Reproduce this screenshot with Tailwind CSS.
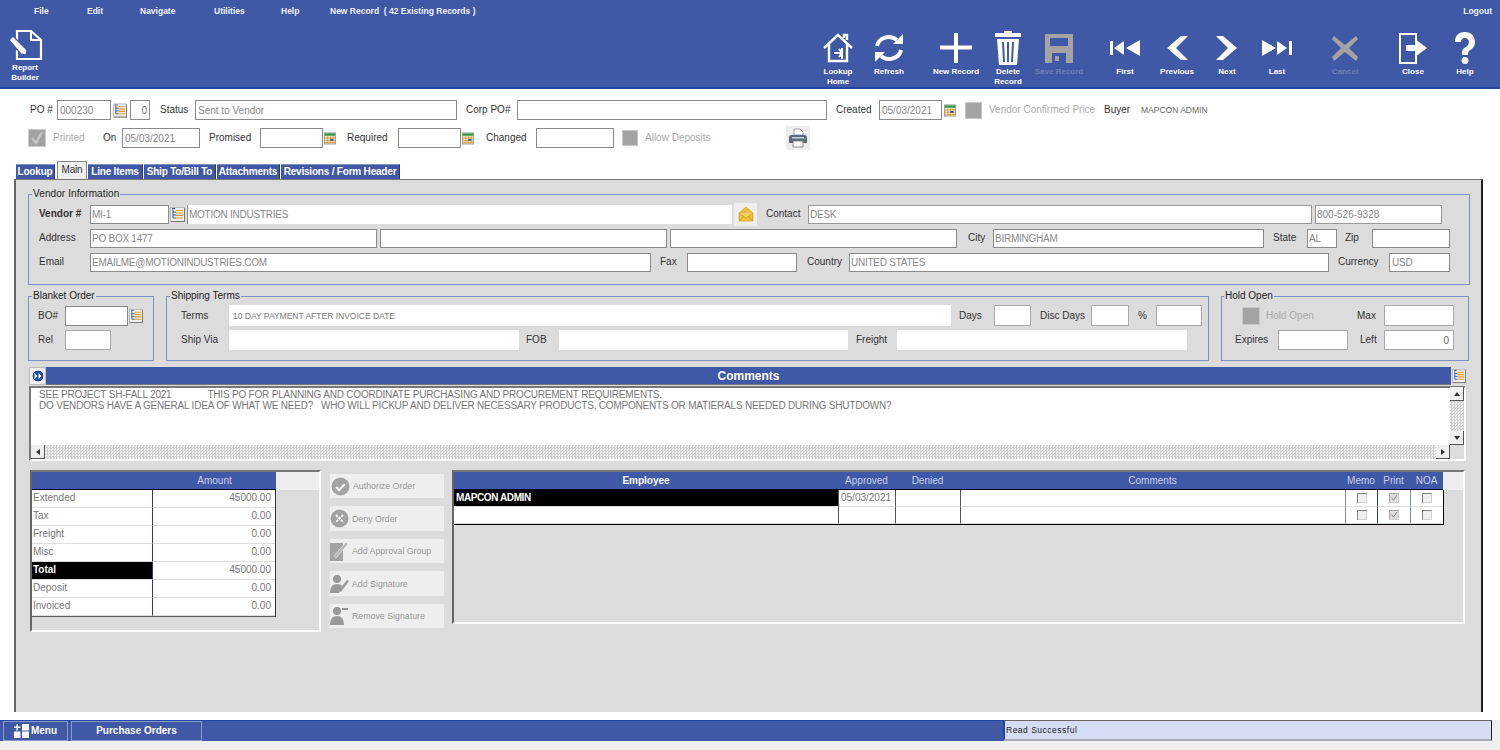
<!DOCTYPE html>
<html lang="en">
<head>
  <meta charset="UTF-8">
  <title>Purchase Orders</title>
  <script src="https://cdn.jsdelivr.net/npm/@tailwindcss/browser@4"></script>
</head>
<body class="w-[1500px] h-[750px] overflow-hidden bg-white flex flex-col font-['Liberation_Sans',Arial,sans-serif] text-[10px] leading-[12px] text-[#333]">
  <svg class="hidden">
    <symbol id="tree" viewBox="0 0 15 15">
      <rect x="0.5" y="0.5" width="14" height="14" fill="#efefef" stroke="#bbb"/>
      <path d="M2 1.5h3M3 2v9h3M3 5h3M3 8h3" stroke="#3a5bb0" fill="none"/>
      <path d="M6 3.5h7M6 6h7M6 8.5h7M6 11h7" stroke="#e0a020" stroke-width="1.2"/>
      <path d="M1 14.5h14M14.5 1v14" stroke="#777"/>
    </symbol>
    <symbol id="cal" viewBox="0 0 13 13">
      <rect x="0.5" y="0.5" width="12" height="12" fill="#eee8c8" stroke="#999"/>
      <rect x="1" y="1" width="11" height="2.5" fill="#2e9a48"/>
      <path d="M1 6h11M1 8.500h11M1 11h11M4 4v8M7 4v8M10 4v8" stroke="#d6902a" stroke-width="0.8"/>
      <rect x="7" y="7" width="3" height="2" fill="#2b50c8"/>
    </symbol>
    <symbol id="check" viewBox="0 0 12 12">
      <rect x="0.500" y="0.500" width="11" height="11" fill="#eee" stroke="#ccc"/>
      <path d="M0.500 11.500v-11h11" fill="none" stroke="#666"/>
    </symbol>
    <symbol id="checked" viewBox="0 0 12 12">
      <rect x="0.500" y="0.500" width="11" height="11" fill="#ddd" stroke="#ccc"/>
      <path d="M0.500 11.500v-11h11" fill="none" stroke="#999"/>
      <path d="M3 5.500l2.500 3 4-6" fill="none" stroke="#888" stroke-width="1.200"/>
    </symbol>
  </svg>

  <header class="h-[89px] shrink-0 bg-[#4059a6] border-b-2 border-[#2347a0] text-white flex flex-col">
    <nav class="flex h-[21px] items-center text-[8.500px] font-bold text-[#eef1fa]">
      <a class="ml-[34px] w-[53px]">File</a>
      <a class="w-[53px]">Edit</a>
      <a class="w-[74px]">Navigate</a>
      <a class="w-[67px]">Utilities</a>
      <a class="w-[49px]">Help</a>
      <a>New Record &nbsp;( 42 Existing Records )</a>
      <a class="ml-auto mr-[8px]">Logout</a>
    </nav>
    <div class="flex pt-[10px] text-[8px] leading-[10px] font-bold text-center">
      <div class="ml-[8px] w-[32px] -mt-[2px]">
        <svg class="block w-[36px] h-[32px]" viewBox="0 0 36 32" fill="none" stroke="#fff">
          <path d="M9 14V2h14l10 9v19H9V21" stroke-width="2.200"/>
          <path d="M23 2v9h10" stroke-width="2"/>
          <path d="M5 7l14 14-1 5-5-1L1 11z" fill="#fff" stroke="#4059a6" stroke-width="1.200"/>
        </svg>
        <div class="mt-[2px] -ml-[3px] w-[40px]">Report<br>Builder</div>
      </div>
      <div class="ml-[773px] w-[50px] flex flex-col items-center">
        <svg class="w-[32px] h-[34px]" viewBox="0 0 32 32" fill="none" stroke="#fff" stroke-width="2.400">
          <path d="M2 16L16 3l14 13M7 12v17h18V12M22 6V3h3v5" />
          <path d="M12 21h8M17 17l3 4-3 4M20 16v11" stroke-width="2"/>
        </svg>
        <div class="mt-[2px]">Lookup<br>Home</div>
      </div>
      <div class="ml-[1px] w-[50px] flex flex-col items-center">
        <svg class="w-[32px] h-[34px]" viewBox="0 0 32 32" fill="none" stroke="#fff" stroke-width="4">
          <path d="M4 14A12 11 0 0 1 24 8"/><path d="M28 18A12 11 0 0 1 8 24"/>
          <path d="M20 12h10V2z" fill="#fff" stroke="none"/><path d="M12 20H2v10z" fill="#fff" stroke="none"/>
        </svg>
        <div class="mt-[2px]">Refresh</div>
      </div>
      <div class="ml-[17px] w-[50px] flex flex-col items-center">
        <svg class="w-[32px] h-[34px]" viewBox="0 0 32 32"><path d="M14 1h4v12.500h14v4H18V31h-4V17.500H0v-4h14z" fill="#fff"/></svg>
        <div class="mt-[2px]">New Record</div>
      </div>
      <div class="ml-[2px] w-[50px] flex flex-col items-center">
        <svg class="w-[28px] h-[34px]" viewBox="0 0 28 34" fill="#fff">
          <path d="M10 0h8v2h9v4H1V2h9z"/>
          <path d="M3 8h22l-2 26H5zM8 11l1 20h2l-1-20zM13 11v20h2V11zM18 11l-1 20h2l1-20z" fill-rule="evenodd"/>
        </svg>
        <div class="mt-[2px]">Delete<br>Record</div>
      </div>
      <div class="ml-[1px] w-[50px] flex flex-col items-center text-[#6d7fb8]">
        <svg class="w-[30px] h-[34px]" viewBox="0 0 30 32" fill="#a3a3a3">
          <path d="M1 2h28v29H1zM6 6v8h18V6zM8 21v10h14V21z" fill-rule="evenodd"/><rect x="11" y="24" width="4" height="5"/>
        </svg>
        <div class="mt-[2px]">Save Record</div>
      </div>
      <div class="ml-[16px] w-[50px] flex flex-col items-center">
        <svg class="w-[32px] h-[34px]" viewBox="0 0 32 32" fill="#fff"><path d="M1 9h3v14H1zM5 16l10-7v14zM17 16l14-8v16z"/></svg>
        <div class="mt-[2px]">First</div>
      </div>
      <div class="ml-[2px] w-[50px] flex flex-col items-center">
        <svg class="w-[24px] h-[34px]" viewBox="0 0 24 32" fill="#fff"><path d="M16 4h7L11 16l12 12h-7L2 16z"/></svg>
        <div class="mt-[2px]">Previous</div>
      </div>
      <div class="w-[50px] flex flex-col items-center">
        <svg class="w-[24px] h-[34px]" viewBox="0 0 24 32" fill="#fff"><path d="M8 4H1l12 12L1 28h7l14-12z"/></svg>
        <div class="mt-[2px]">Next</div>
      </div>
      <div class="w-[50px] flex flex-col items-center">
        <svg class="w-[32px] h-[34px]" viewBox="0 0 32 32" fill="#fff"><path d="M1 8l14 8-14 8zM16 9l10 7-10 7zM28 9h3v14h-3z"/></svg>
        <div class="mt-[2px]">Last</div>
      </div>
      <div class="ml-[18px] w-[50px] flex flex-col items-center text-[#6d7fb8]">
        <svg class="w-[28px] h-[34px]" viewBox="0 0 28 32"><path d="M3 4l11 9 11-9 2 3-9 9 9 9-2 4-11-9-11 9-2-4 9-9-9-9z" fill="#a3a3a3"/></svg>
        <div class="mt-[2px]">Cancel</div>
      </div>
      <div class="ml-[18px] w-[50px] flex flex-col items-center">
        <svg class="w-[30px] h-[34px]" viewBox="0 0 30 32" fill="none" stroke="#fff" stroke-width="2">
          <path d="M18 9V2H2v29h16v-7"/><path d="M8 13h9V7l12 9-12 9v-6H8z" fill="#fff" stroke="none"/>
        </svg>
        <div class="mt-[2px]">Close</div>
      </div>
      <div class="ml-[2px] w-[50px] flex flex-col items-center">
        <svg class="w-[24px] h-[34px]" viewBox="0 0 24 34" fill="#fff">
          <path d="M2 11C2 4 6 1 12 1s10 4 10 10c0 5-3 7-6 9-1 1-1 2-1 4H9c0-4 0-6 4-8 2-2 3-3 3-5 0-2-2-4-4-4-3 0-4 2-4 4z"/><circle cx="12" cy="29.500" r="3.500"/>
        </svg>
        <div class="mt-[2px]">Help</div>
      </div>
    </div>
  </header>

  <section class="h-[72px] shrink-0 pt-[11px]">
    <div class="flex items-center h-[20px]">
      <label class="ml-[30px] w-[27px]">PO #</label>
      <input value="000230" class="w-[54px] h-[20px] border border-[#8a8a8a] px-[2px] text-[10px] text-[#888]">
      <svg class="ml-[2px] w-[14px] h-[15px]"><use href="#tree"/></svg>
      <input value="0" class="ml-[3px] w-[20px] h-[20px] border border-[#8a8a8a] px-[2px] text-right text-[10px] text-[#777]">
      <label class="ml-[10px] w-[35px]">Status</label>
      <input value="Sent to Vendor" class="w-[262px] h-[20px] border border-[#8a8a8a] px-[2px] text-[10px] text-[#888]">
      <label class="ml-[9px] w-[51px]">Corp PO#</label>
      <input class="w-[310px] h-[20px] border border-[#8a8a8a]">
      <label class="ml-[9px] w-[43px]">Created</label>
      <input value="05/03/2021" class="w-[63px] h-[20px] border border-[#8a8a8a] px-[2px] text-[10px] text-[#888]">
      <svg class="ml-[2px] w-[12px] h-[13px]"><use href="#cal"/></svg>
      <div class="ml-[9px] w-[17px] h-[17px] bg-[#a3a3a3] border border-[#c8c8c8]"></div>
      <label class="ml-[7px] w-[115px] text-[#aaa]">Vendor Confirmed Price</label>
      <label class="w-[37px]">Buyer</label>
      <span class="text-[8.500px] text-[#666]">MAPCON ADMIN</span>
    </div>
    <div class="flex items-center h-[20px] mt-[8px]">
      <svg class="ml-[28px] w-[18px] h-[18px]" viewBox="0 0 18 18"><rect x="0.500" y="0.500" width="17" height="17" fill="#a3a3a3" stroke="#ccc"/><path d="M4 9l4 5 6-11" fill="none" stroke="#c9c9c9" stroke-width="2"/></svg>
      <label class="ml-[7px] w-[50px] text-[#aaa]">Printed</label>
      <label class="w-[19px]">On</label>
      <input value="05/03/2021" class="w-[78px] h-[20px] border border-[#8a8a8a] px-[2px] text-[10px] text-[#888]">
      <label class="ml-[9px] w-[51px]">Promised</label>
      <input class="w-[63px] h-[20px] border border-[#8a8a8a]">
      <svg class="ml-[1px] w-[12px] h-[13px]"><use href="#cal"/></svg>
      <label class="ml-[11px] w-[51px]">Required</label>
      <input class="w-[63px] h-[20px] border border-[#8a8a8a]">
      <svg class="ml-[1px] w-[12px] h-[13px]"><use href="#cal"/></svg>
      <label class="ml-[12px] w-[50px]">Changed</label>
      <input class="w-[78px] h-[20px] border border-[#8a8a8a]">
      <div class="ml-[8px] w-[16px] h-[16px] bg-[#a3a3a3] border border-[#c8c8c8]"></div>
      <label class="ml-[7px] w-[141px] text-[#aaa]">Allow Deposits</label>
      <div class="w-[24px] h-[24px] bg-[#eee] flex items-center justify-center">
        <svg class="w-[20px] h-[20px]" viewBox="0 0 20 20">
          <path d="M6 7V1h6l3 3v3z" fill="#fff" stroke="#888" stroke-width="0.800"/>
          <path d="M1 9q0-2 3-2h12q3 0 3 2v6H1z" fill="#5d6a7c"/>
          <rect x="4" y="9" width="12" height="1.500" fill="#c8d0da"/>
          <rect x="5" y="13" width="10" height="6" fill="#fff" stroke="#777" stroke-width="0.800"/>
          <circle cx="17" cy="11" r="0.800" fill="#3c3"/>
        </svg>
      </div>
    </div>
  </section>

  <div class="h-[18px] flex items-end shrink-0 pl-[16px] font-bold tracking-[-0.200px] text-white">
    <a class="w-[39px] h-[15px] bg-[#4059a6] border-t border-t-[#7d8fc8] border-r border-r-[#223a80] text-center leading-[14px] mr-[2px]">Lookup</a>
    <a class="w-[30px] h-[18px] bg-[#efefef] border border-[#888] border-b-0 text-center font-normal text-[#333] leading-[15px] mr-[1px]">Main</a>
    <a class="w-[55px] h-[15px] bg-[#4059a6] border-t border-t-[#7d8fc8] border-r border-r-[#223a80] text-center leading-[14px] mr-[1px]">Line Items</a>
    <a class="w-[72px] h-[15px] bg-[#4059a6] border-t border-t-[#7d8fc8] border-r border-r-[#223a80] text-center leading-[14px] mr-[1px]">Ship To/Bill To</a>
    <a class="w-[63px] h-[15px] bg-[#4059a6] border-t border-t-[#7d8fc8] border-r border-r-[#223a80] text-center leading-[14px] mr-[1px]">Attachments</a>
    <a class="w-[119px] h-[15px] bg-[#4059a6] border-t border-t-[#7d8fc8] border-r border-r-[#223a80] text-center leading-[14px]">Revisions / Form Header</a>
  </div>

  <main class="ml-[14px] w-[1469px] h-[533px] shrink-0 bg-[#dcdcdc] border-l-2 border-l-[#666] border-r-2 border-r-[#222] border-t border-t-[#777] pl-[12px] pt-[8px]">
    <fieldset class="w-[1442px] h-[97px] border border-[#7f90c4] pl-[10px]">
      <legend class="-ml-[7px] px-[1px] text-[#222] tracking-[0.100px]">Vendor Information</legend>
      <div class="flex items-center h-[20px] mt-[4px]">
        <label class="w-[51px] font-bold text-[#333]">Vendor #</label>
        <input value="MI-1" class="w-[79px] h-[19px] bg-white border border-[#8a8a8a] px-[1px] text-[10px] tracking-[-0.250px] text-[#888]">
        <svg class="ml-[1px] w-[15px] h-[17px]"><use href="#tree"/></svg>
        <input value="MOTION INDUSTRIES" class="ml-[2px] w-[545px] h-[19px] bg-white border-l border-l-[#8a8a8a] px-[1px] text-[10px] tracking-[-0.250px] text-[#888]">
        <div class="ml-[2px] w-[23px] h-[23px] bg-[#eee] flex items-center justify-center">
          <svg class="w-[16px] h-[16px]" viewBox="0 0 16 16">
            <path d="M1 7L8 1l7 6v8H1z" fill="#efbf3c" stroke="#c39a24" stroke-width="0.600"/>
            <path d="M1 7l7 5 7-5" fill="#f3d060" stroke="#c39a24" stroke-width="0.600"/>
            <path d="M1 15l5-5M15 15l-5-5" stroke="#c39a24" stroke-width="0.600"/>
          </svg>
        </div>
        <label class="ml-[9px] w-[42px]">Contact</label>
        <input value="DESK" class="w-[504px] h-[19px] bg-white border border-[#999] px-[1px] text-[10px] tracking-[-0.250px] text-[#888]">
        <input value="800-526-9328" class="ml-[3px] w-[127px] h-[19px] bg-white border border-[#999] px-[1px] text-[10px] text-[#888]">
      </div>
      <div class="flex items-center h-[20px] mt-[4px]">
        <label class="w-[51px]">Address</label>
        <input value="PO BOX 1477" class="w-[287px] h-[19px] bg-white border border-[#8a8a8a] px-[1px] text-[10px] tracking-[-0.250px] text-[#888]">
        <input class="ml-[3px] w-[287px] h-[19px] bg-white border border-[#8a8a8a]">
        <input class="ml-[3px] w-[287px] h-[19px] bg-white border border-[#8a8a8a]">
        <label class="ml-[11px] w-[25px]">City</label>
        <input value="BIRMINGHAM" class="w-[271px] h-[19px] bg-white border border-[#8a8a8a] px-[1px] text-[10px] tracking-[-0.250px] text-[#888]">
        <label class="ml-[9px] w-[34px]">State</label>
        <input value="AL" class="w-[30px] h-[19px] bg-white border border-[#8a8a8a] px-[1px] text-[10px] tracking-[-0.250px] text-[#888]">
        <label class="ml-[8px] w-[27px]">Zip</label>
        <input class="w-[78px] h-[19px] bg-white border border-[#8a8a8a]">
      </div>
      <div class="flex items-center h-[20px] mt-[4px]">
        <label class="w-[51px]">Email</label>
        <input value="EMAILME@MOTIONINDUSTRIES.COM" class="w-[561px] h-[19px] bg-white border border-[#8a8a8a] px-[1px] text-[10px] tracking-[-0.250px] text-[#888]">
        <label class="ml-[9px] w-[27px]">Fax</label>
        <input class="w-[110px] h-[19px] bg-white border border-[#8a8a8a]">
        <label class="ml-[10px] w-[42px]">Country</label>
        <input value="UNITED STATES" class="w-[480px] h-[19px] bg-white border border-[#8a8a8a] px-[1px] text-[10px] tracking-[-0.250px] text-[#888]">
        <label class="ml-[9px] w-[51px]">Currency</label>
        <input value="USD" class="w-[61px] h-[19px] bg-white border border-[#8a8a8a] px-[2px] text-[10px] tracking-[-0.250px] text-[#888]">
      </div>
    </fieldset>

    <div class="flex mt-[5px]">
      <fieldset class="w-[126px] h-[71px] border border-[#7f90c4] pl-[9px]">
        <legend class="-ml-[6px] px-[1px] text-[#222]">Blanket Order</legend>
        <div class="flex items-center h-[20px] mt-[4px]">
          <label class="w-[27px]">BO#</label>
          <input class="w-[63px] h-[20px] bg-white border border-[#8a8a8a]">
          <svg class="ml-[1px] w-[14px] h-[16px]"><use href="#tree"/></svg>
        </div>
        <div class="flex items-center h-[20px] mt-[4px]">
          <label class="w-[27px]">Rel</label>
          <input class="w-[46px] h-[20px] bg-white border border-[#aaa]">
        </div>
      </fieldset>
      <fieldset class="ml-[12px] w-[1043px] h-[71px] border border-[#7f90c4] pl-[14px]">
        <legend class="-ml-[11px] px-[1px] text-[#222]">Shipping Terms</legend>
        <div class="flex items-center h-[21px] mt-[3px]">
          <label class="w-[48px]">Terms</label>
          <input value="10 DAY PAYMENT AFTER INVOICE DATE" class="w-[722px] h-[21px] bg-white px-[4px] text-[8.500px] text-[#777]">
          <label class="ml-[8px] w-[35px]">Days</label>
          <input class="w-[37px] h-[21px] bg-white border border-[#aaa]">
          <label class="ml-[9px] w-[51px]">Disc Days</label>
          <input class="w-[38px] h-[21px] bg-white border border-[#aaa]">
          <label class="ml-[9px] w-[18px]">%</label>
          <input class="w-[46px] h-[21px] bg-white border border-[#aaa]">
        </div>
        <div class="flex items-center h-[20px] mt-[4px]">
          <label class="w-[48px]">Ship Via</label>
          <input class="w-[290px] h-[20px] bg-white">
          <label class="ml-[7px] w-[33px]">FOB</label>
          <input class="w-[289px] h-[20px] bg-white">
          <label class="ml-[8px] w-[41px]">Freight</label>
          <input class="w-[290px] h-[20px] bg-white">
        </div>
      </fieldset>
      <fieldset class="ml-[12px] w-[248px] h-[71px] border border-[#7f90c4] pl-[13px]">
        <legend class="-ml-[11px] px-[1px] text-[#222]">Hold Open</legend>
        <div class="flex items-center h-[21px] mt-[3px]">
          <div class="ml-[7px] w-[18px] h-[18px] bg-[#a3a3a3] border border-[#c8c8c8]"></div>
          <label class="ml-[6px] w-[91px] text-[#aaa]">Hold Open</label>
          <label class="w-[27px]">Max</label>
          <input class="w-[70px] h-[21px] bg-white border border-[#aaa]">
        </div>
        <div class="flex items-center h-[20px] mt-[4px]">
          <label class="w-[43px]">Expires</label>
          <input class="w-[70px] h-[20px] bg-white border border-[#aaa]">
          <label class="ml-[12px] w-[24px]">Left</label>
          <input value="0" class="w-[70px] h-[20px] bg-white border border-[#aaa] px-[4px] text-right text-[10px] text-[#666]">
        </div>
      </fieldset>
    </div>

    <section class="ml-[1px] mt-[6px] w-[1437px]">
      <div class="flex h-[19px]">
        <div class="w-[17px] h-[18px] bg-[#efefef] border border-[#bbb] flex items-center justify-center">
          <svg class="w-[14px] h-[14px]" viewBox="0 0 14 14"><circle cx="7" cy="7" r="6" fill="#2347a0" stroke="#fff"/><path d="M3.500 4l3 3-3 3zM7.500 4l3 3-3 3z" fill="#fff"/></svg>
        </div>
        <h2 class="flex-1 h-[18px] bg-[#4059a6] border-b border-[#777] text-center text-white font-bold text-[12px] leading-[18px]">Comments</h2>
        <svg class="ml-[1px] w-[14px] h-[18px]"><use href="#tree"/></svg>
      </div>
      <div class="h-[75px] relative bg-[#dcdcdc] border-l-2 border-t-2 border-l-[#777] border-t-[#777] border-r-2 border-b-2 border-r-white border-b-white">
        <div class="w-[1419px] h-[57px] bg-white pl-[8px] pt-[1px] tracking-[-0.200px] text-[#777] leading-[11px]">
          <p class="whitespace-pre">SEE PROJECT SH-FALL 2021              THIS PO FOR PLANNING AND COORDINATE PURCHASING AND PROCUREMENT REQUIREMENTS.</p>
          <p class="whitespace-pre">DO VENDORS HAVE A GENERAL IDEA OF WHAT WE NEED?   WHO WILL PICKUP AND DELIVER NECESSARY PRODUCTS, COMPONENTS OR MATIERALS NEEDED DURING SHUTDOWN?</p>
        </div>
        <div class="absolute left-[1419px] -top-[1px] w-[14px] h-[58px] flex flex-col justify-between bg-[repeating-conic-gradient(#cfcfcf_0_25%,#efefef_0_50%)] bg-[length:3px_3px]">
          <div class="h-[14px] bg-[#efefef] border-r border-b border-[#555] flex items-center justify-center"><div class="border-x-[3px] border-x-transparent border-b-[4px] border-b-[#333]"></div></div>
          <div class="h-[14px] bg-[#efefef] border-r border-b border-[#555] flex items-center justify-center"><div class="border-x-[3px] border-x-transparent border-t-[4px] border-t-[#333]"></div></div>
        </div>
        <div class="h-[14px] w-[1419px] flex justify-between bg-[repeating-conic-gradient(#cfcfcf_0_25%,#efefef_0_50%)] bg-[length:3px_3px]">
          <div class="w-[14px] bg-[#efefef] border-r border-b border-[#555] flex items-center justify-center"><div class="border-y-[3px] border-y-transparent border-r-[4px] border-r-[#333]"></div></div>
          <div class="w-[14px] bg-[#efefef] border-r border-b border-[#555] flex items-center justify-center"><div class="border-y-[3px] border-y-transparent border-l-[4px] border-l-[#333]"></div></div>
        </div>
      </div>
    </section>

    <div class="flex items-start ml-[2px] mt-[9px]">
      <div class="w-[291px] h-[162px] border-l-2 border-t-2 border-l-[#666] border-t-[#777] border-r-2 border-b-2 border-r-white border-b-white text-[#777]">
        <div class="flex h-[18px]">
          <div class="w-[244px] bg-[#4059a6] border-b border-black text-center leading-[17px] text-[#c7d0ea] pl-[121px]">Amount</div>
          <div class="flex-1 bg-[#eee]"></div>
        </div>
        <div class="w-[244px] border-r border-b border-r-[#333] border-b-[#555] bg-white grid grid-cols-[121px_1fr] auto-rows-[18px] leading-[15px] [&>div]:border-b [&>div]:border-b-[#ddd]">
          <div class="pl-[1px] border-r border-r-[#223a80]">Extended</div><div class="text-right pr-[4px]">45000.00</div>
          <div class="pl-[1px] border-r border-r-[#223a80]">Tax</div><div class="text-right pr-[4px]">0.00</div>
          <div class="pl-[1px] border-r border-r-[#223a80]">Freight</div><div class="text-right pr-[4px]">0.00</div>
          <div class="pl-[1px] border-r border-r-[#223a80]">Misc</div><div class="text-right pr-[4px]">0.00</div>
          <div class="pl-[1px] bg-black text-white font-bold border-r border-r-[#223a80]">Total</div><div class="text-right pr-[4px]">45000.00</div>
          <div class="pl-[1px] border-r border-r-[#223a80]">Deposit</div><div class="text-right pr-[4px]">0.00</div>
          <div class="pl-[1px] border-r border-r-[#223a80]">Invoiced</div><div class="text-right pr-[4px]">0.00</div>
        </div>
      </div>

      <div class="ml-[9px] mt-[4px] w-[114px] flex flex-col gap-[8px] text-[8.800px] text-[#999]">
        <button class="h-[24px] bg-[#eee] flex items-center gap-[3px] pl-[1px]">
          <svg class="w-[19px] h-[19px]" viewBox="0 0 19 19"><circle cx="9.500" cy="9.500" r="9" fill="#a3a3a3"/><path d="M5 10l3 3 6-6" fill="none" stroke="#fff" stroke-width="2"/></svg>Authorize Order
        </button>
        <button class="h-[25px] bg-[#eee] flex items-center gap-[3px]">
          <svg class="w-[19px] h-[19px]" viewBox="0 0 19 19"><circle cx="9.500" cy="9.500" r="9" fill="#a3a3a3"/><path d="M6 6l7 7M13 6l-7 7" fill="none" stroke="#fff" stroke-width="1.800" stroke-dasharray="2.500 1"/></svg>Deny Order
        </button>
        <button class="h-[24px] bg-[#eee] flex items-center gap-[3px]">
          <svg class="w-[19px] h-[20px]" viewBox="0 0 19 20"><path d="M0 2h13v18H0z" fill="#a3a3a3"/><path d="M4 15L16 1l2 2L6 17z" fill="#b8b8b8" stroke="#eee" stroke-width="0.600"/></svg>Add Approval Group
        </button>
        <button class="h-[25px] bg-[#eee] flex items-center gap-[3px]">
          <svg class="w-[19px] h-[20px]" viewBox="0 0 19 20"><circle cx="7" cy="5" r="4" fill="#999"/><path d="M0 19q0-9 7-9 4 0 5 2l-3 7z" fill="#999"/><path d="M9 16L17 6l2 1-8 11z" fill="#999"/></svg>Add Signature
        </button>
        <button class="h-[24px] bg-[#eee] flex items-center gap-[3px]">
          <svg class="w-[19px] h-[20px]" viewBox="0 0 19 20"><circle cx="7" cy="5" r="4" fill="#999"/><path d="M0 19q0-9 7-9t7 9z" fill="#999"/><path d="M12 3h6" stroke="#777" stroke-width="1.500"/></svg>Remove Signature
        </button>
      </div>

      <div class="ml-[8px] w-[1013px] h-[154px] border-l-2 border-t-2 border-l-[#666] border-t-[#777] border-r-2 border-b-2 border-r-white border-b-white">
        <div class="flex h-[18px]">
          <div class="w-[989px] bg-[#4059a6] border-b border-black grid grid-cols-[384px_57px_65px_385px_32px_33px_33px] text-center leading-[17px] text-[#c7d0ea]">
            <div class="text-white font-bold">Employee</div><div>Approved</div><div>Denied</div><div>Comments</div><div>Memo</div><div>Print</div><div>NOA</div>
          </div>
          <div class="flex-1 bg-[#eee]"></div>
        </div>
        <div class="w-[990px] bg-white border-r border-b border-black grid grid-cols-[384px_57px_65px_385px_32px_33px_33px] auto-rows-[17px] leading-[15px] text-[#777] [&>div]:border-b [&>div]:border-b-[#ddd]">
          <div class="bg-black text-white tracking-[-0.400px] font-bold pl-[2px]">MAPCON ADMIN</div>
          <div class="border-l border-l-[#555] pl-[2px]">05/03/2021</div>
          <div class="border-l border-l-[#555]"></div>
          <div class="border-l border-l-[#555]"></div>
          <div class="border-l border-l-[#7a88aa] flex items-center justify-center"><svg class="w-[10px] h-[10px]"><use href="#check"/></svg></div>
          <div class="border-l border-l-[#223a80] flex items-center justify-center"><svg class="w-[10px] h-[10px]"><use href="#checked"/></svg></div>
          <div class="border-l border-l-[#7a88aa] flex items-center justify-center"><svg class="w-[10px] h-[10px]"><use href="#check"/></svg></div>
          <div></div>
          <div class="border-l border-l-[#555]"></div>
          <div class="border-l border-l-[#555]"></div>
          <div class="border-l border-l-[#555]"></div>
          <div class="border-l border-l-[#7a88aa] flex items-center justify-center"><svg class="w-[10px] h-[10px]"><use href="#check"/></svg></div>
          <div class="border-l border-l-[#223a80] flex items-center justify-center"><svg class="w-[10px] h-[10px]"><use href="#checked"/></svg></div>
          <div class="border-l border-l-[#7a88aa] flex items-center justify-center"><svg class="w-[10px] h-[10px]"><use href="#check"/></svg></div>
        </div>
      </div>
    </div>
  </main>

  <footer class="mt-[8px] h-[30px] shrink-0 bg-[#efefef]">
    <div class="flex h-[21px] w-[1492px]">
      <div class="w-[1003px] bg-[#4059a6] border-t border-[#2347a0] pl-[3px] flex text-white font-bold">
        <button class="w-[65px] h-[20px] border border-[#8a9ad0] flex items-center justify-center gap-[2px]">
          <svg class="w-[15px] h-[14px]" viewBox="0 0 15 14" fill="#fff"><path d="M2.500 0h1.500v2.500h2.500v1.500H4v2.500H2.500V4H0V2.500h2.500zM8 0h7v6.500H8zM0 7.500h6.500V14H0zM8 7.500h7V14H8z"/></svg>Menu
        </button>
        <button class="ml-[3px] w-[131px] h-[20px] border border-[#8a9ad0]">Purchase Orders</button>
      </div>
      <div class="flex-1 bg-[#d5dcf3] border-l-2 border-l-[#2347a0] border-t border-t-[#666] border-r border-r-[#222] border-b-2 border-b-[#aab] pl-[1px] leading-[18px] text-[8.500px] tracking-[0.500px] text-[#222]">Read Successful</div>
    </div>
  </footer>
</body>
</html>
